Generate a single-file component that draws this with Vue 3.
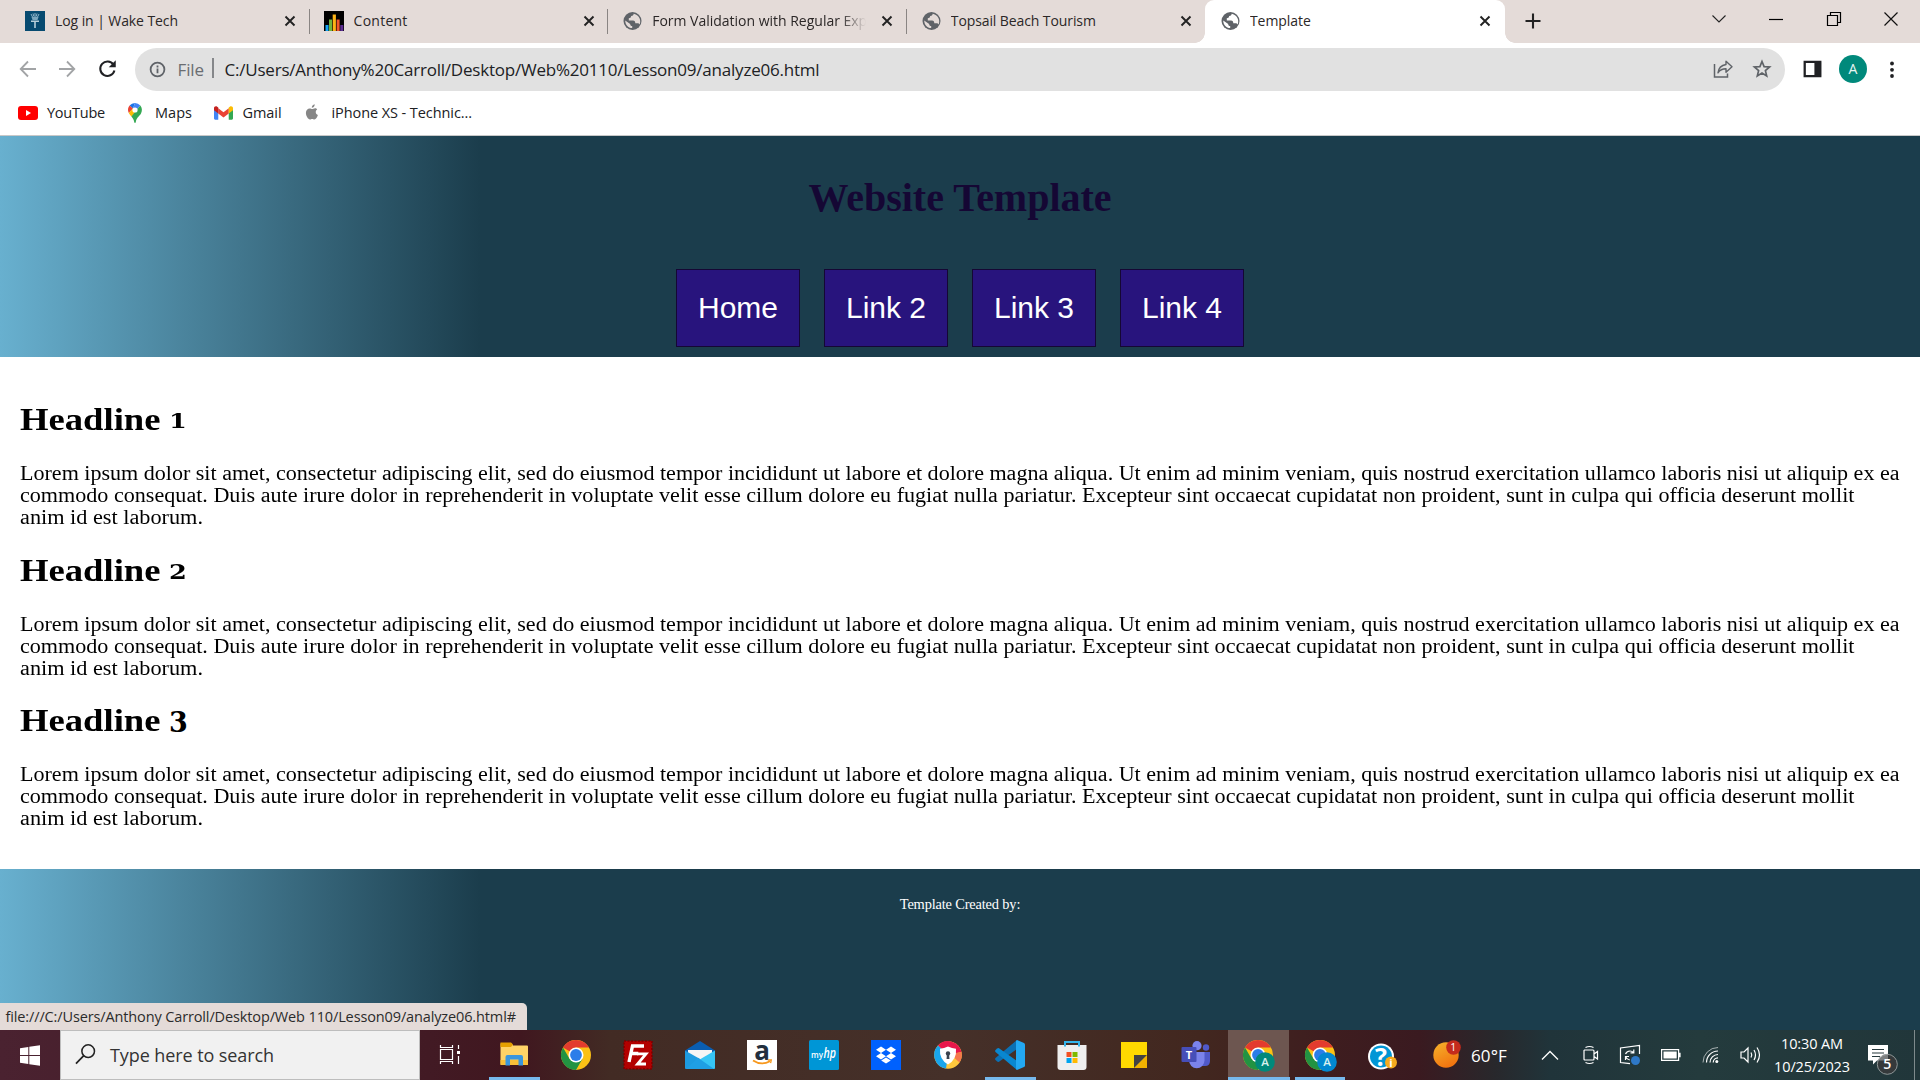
<script setup>
// Spreads or tightens letters so a label takes a given width in pixels.
const vFit = {
  mounted(el, { value }) {
    el.style.letterSpacing = '0.001px'
    const natural = el.getBoundingClientRect().width
    el.style.letterSpacing = `${(value - natural) / el.textContent.length}px`
  },
}

// Widens the glyphs themselves, for the broad serif of the article text.
const vStretch = {
  mounted(el, { value }) {
    el.style.transform = `scaleX(${value / el.getBoundingClientRect().width})`
  },
}

const tabs = [
  { title: 'Log in | Wake Tech', width: 123, icon: 'wake' },
  { title: 'Content', width: 54, icon: 'bars' },
  { title: 'Form Validation with Regular Exp', width: 215, icon: 'globe', faded: true },
  { title: 'Topsail Beach Tourism', width: 145, icon: 'globe' },
  { title: 'Template', width: 61, icon: 'globe', active: true },
]

const links = ['Home', 'Link 2', 'Link 3', 'Link 4']

const lines = [
  { text: 'Lorem ipsum dolor sit amet, consectetur adipiscing elit, sed do eiusmod tempor incididunt ut labore et dolore magna aliqua. Ut enim ad minim veniam, quis nostrud exercitation ullamco laboris nisi ut aliquip ex ea', width: 1879.5 },
  { text: 'commodo consequat. Duis aute irure dolor in reprehenderit in voluptate velit esse cillum dolore eu fugiat nulla pariatur. Excepteur sint occaecat cupidatat non proident, sunt in culpa qui officia deserunt mollit', width: 1834.5 },
  { text: 'anim id est laborum.', width: 183 },
]

const sections = [1, 2, 3]

const apps = ['explorer', 'chrome', 'filezilla', 'mail', 'amazon', 'myhp', 'dropbox', 'secure', 'vscode', 'store', 'sticky', 'teams', 'chromeA', 'chromeB', 'help']
const running = { explorer: 51, vscode: 51, chromeA: 62, chromeB: 50 }
</script>

<template>
  <div class="screen">
    <div class="tabstrip">
      <div v-for="tab in tabs" :key="tab.title" class="tab" :class="{ active: tab.active }">
        <svg v-if="tab.icon === 'wake'" class="favicon" viewBox="0 0 20 20">
          <rect width="20" height="20" fill="#064a70" />
          <path d="M6 3l1.500 3M10 2v4M14 3l-1.500 3M8 2.500l.8 3M12 2.500l-.8 3" stroke="#8fb4c8" stroke-width="1" />
          <path d="M6.500 6h7l-1 3h-5z" fill="#7ba6bd" />
          <path d="M6 10.200h8M10 10v7" stroke="#b5ced9" stroke-width="1.600" />
        </svg>
        <svg v-else-if="tab.icon === 'bars'" class="favicon" viewBox="0 0 20 20">
          <rect width="20" height="20" fill="#000" />
          <rect x="1.500" y="14" width="3" height="6" fill="#16a5f5" />
          <rect x="5" y="8.500" width="3" height="11.500" fill="#6db33f" />
          <rect x="8.700" y="3.500" width="3.200" height="16.500" fill="#fcb316" />
          <rect x="12.600" y="8.500" width="3" height="11.500" fill="#f2572b" />
          <rect x="16.300" y="14" width="3" height="6" fill="#5c2d91" />
        </svg>
        <svg v-else class="favicon globe" viewBox="0 0 20 20">
          <circle cx="10.500" cy="10" r="9" fill="#5f6368" />
          <path d="M11.700 2.700c-.2 1.600-1.200 2.200-2.500 2.300-.3 1.500-1 2.200-2.400 2.300v2.200h4.200c1.700 0 2.300 1.200 2.300 2.700h2.500c.9 0 1.500.4 1.900 1.200 1.500-3.900.1-9-6-10.700z" fill="#e4dbd8" :class="{ land: tab.active }" />
          <path d="M3.200 9.400c.1 4.200 2.800 7.500 7 7.700v-2c-1.300 0-2-.8-2-2.200z" fill="#e4dbd8" :class="{ land: tab.active }" />
        </svg>
        <div class="title" :class="{ faded: tab.faded }"><span v-fit="tab.width" class="fit">{{ tab.title }}</span></div>
        <svg class="close" viewBox="0 0 12 12"><path d="M1.500 1.500l9 9M10.500 1.500l-9 9" stroke="#222" stroke-width="1.900" /></svg>
      </div>
      <svg class="plus" viewBox="0 0 16 16"><path d="M8 .5v15M.5 8h15" stroke="#222" stroke-width="2.100" /></svg>
      <div class="window-buttons">
        <svg viewBox="0 0 16 16"><path d="M1.500 4.500L8 11l6.500-6.500" fill="none" stroke="#222" stroke-width="1.100" /></svg>
        <svg viewBox="0 0 16 16"><path d="M1 8.500h14" stroke="#000" stroke-width="1.200" /></svg>
        <svg viewBox="0 0 16 16"><path d="M1.500 4.500h10v10h-10zM4.500 4.500v-3h10v10h-3" fill="none" stroke="#000" stroke-width="1.200" /></svg>
        <svg viewBox="0 0 16 16"><path d="M1.500 1.500l13 13M14.500 1.500l-13 13" stroke="#111" stroke-width="1.200" /></svg>
      </div>
    </div>

    <div class="toolbar">
      <svg class="nav back" viewBox="0 0 18 18"><path d="M17 9H2M9 1.500L1.700 9 9 16.500" fill="none" stroke="#a2a4a6" stroke-width="1.800" /></svg>
      <svg class="nav forward" viewBox="0 0 18 18"><path d="M1 9h15M9 1.500L16.300 9 9 16.500" fill="none" stroke="#a2a4a6" stroke-width="1.800" /></svg>
      <svg class="nav reload" viewBox="0 0 18 18"><path d="M15 5.500A7 7 0 1 0 16 11.200" fill="none" stroke="#202124" stroke-width="2" /><path d="M17.300 1.200v6.800h-6.800z" fill="#202124" /></svg>
      <div class="omnibox">
        <svg class="info" viewBox="0 0 18 18"><circle cx="9" cy="9" r="7.300" fill="none" stroke="#5f6368" stroke-width="1.900" /><path d="M9 8v5M9 4.800v2" stroke="#5f6368" stroke-width="1.900" /></svg>
        <span v-fit="26.5" class="fit file">File</span>
        <i class="divider"></i>
        <span v-fit="595" class="fit url">C:/Users/Anthony%20Carroll/Desktop/Web%20110/Lesson09/analyze06.html</span>
        <svg class="share" viewBox="0 0 20 20"><path d="M1.500 5v13h13v-3.500" fill="none" stroke="#5f6368" stroke-width="1.500" /><path d="M13 2.200l6 5.600-6 5.400v-3.400c-3.500 0-6 1-8 4 .5-4.500 3-7.500 8-8.300z" fill="none" stroke="#5f6368" stroke-width="1.400" stroke-linejoin="round" /></svg>
        <svg class="star" viewBox="0 0 20 20"><path d="M10 2.500l2.100 5.100 5.500.4-4.200 3.600 1.300 5.400-4.700-2.900L5.300 17l1.300-5.400L2.400 8l5.500-.4z" fill="none" stroke="#5f6368" stroke-width="1.700" /></svg>
      </div>
      <svg class="panel" viewBox="0 0 20 18"><path d="M1.800 1.500h16.400v15H1.800z" fill="none" stroke="#202124" stroke-width="2.400" /><path d="M12 1h7v16h-7z" fill="#202124" /></svg>
      <div class="avatar">A</div>
      <svg class="dots" viewBox="0 0 4 18"><g fill="#202124"><circle cx="2" cy="3" r="1.900" /><circle cx="2" cy="9.300" r="1.900" /><circle cx="2" cy="15.500" r="1.900" /></g></svg>
    </div>

    <div class="bookmarks">
      <svg class="bm youtube" viewBox="0 0 20 14"><rect width="20" height="14" rx="3" fill="#f00" /><path d="M8 4l5 3-5 3z" fill="#fff" /></svg>
      <span v-fit="58" class="fit">YouTube</span>
      <svg class="bm maps" viewBox="0 0 14 20">
        <path d="M7 0a7 7 0 0 0-5.400 2.500L5 5.400z" fill="#1a73e8" />
        <path d="M1.600 2.500A7 7 0 0 0 .8 10L5 5.400z" fill="#ea4335" />
        <path d="M7 0a7 7 0 0 1 5.300 2.500L8.800 6.700 5 5.400z" fill="#4285f4" />
        <path d="M.8 10c.6 1.200 1.600 2.300 2.600 3.600L9.200 8.500 4.800 5.500z" fill="#fbbc04" />
        <path d="M12.300 2.500c1.800 2 2.200 5.200.7 8-2 3.300-4.500 4-5.200 8.500-.2 1.200-1.400 1.200-1.600 0-.4-2.200-1.400-3.700-2.800-5.400z" fill="#34a853" />
        <circle cx="7" cy="7" r="2.600" fill="#fff" />
      </svg>
      <span v-fit="37" class="fit">Maps</span>
      <svg class="bm gmail" viewBox="0 0 20 14">
        <path d="M0 2.500h4.500V14H1.200A1.200 1.200 0 0 1 0 12.800z" fill="#4285f4" />
        <path d="M15.500 2.500H20v10.300a1.200 1.200 0 0 1-1.200 1.200h-3.300z" fill="#34a853" />
        <path d="M4.500 2l5.500 4.100L15.500 2v5.600L10 11.700 4.500 7.600z" fill="#ea4335" />
        <path d="M0 2C0 .2 2-.6 3.400.5l1.100.8v6.300L0 4.200z" fill="#c5221f" />
        <path d="M20 2c0-1.800-2-2.600-3.400-1.500l-1.100.8v6.300L20 4.200z" fill="#fbbc04" />
      </svg>
      <span v-fit="39" class="fit">Gmail</span>
      <svg class="bm apple" viewBox="0 0 14 17"><path d="M9.700.2c.2 1.800-1.200 3.500-2.900 3.600C6.600 2.100 8 .4 9.700.2zM12.200 5.400c-2.200 1.400-1.800 4.500.7 5.500-.6 1.900-2 4.500-3.500 4.500-.9 0-1.200-.5-2.200-.5s-1.400.5-2.200.5C3.200 15.500.9 11.900.9 9c0-3 1.900-4.600 3.700-4.600 1.100 0 2 .7 2.600.7s1.600-.8 3-.8c.8 0 1.600.4 2 1.100z" fill="#868686" /></svg>
      <span v-fit="140.500" class="fit">iPhone XS - Technic...</span>
    </div>

    <div class="page">
      <header>
        <h1><span v-fit="303" class="fit">Website Template</span></h1>
        <nav><a v-for="link in links" :key="link">{{ link }}</a></nav>
      </header>
      <main>
        <section v-for="n in sections" :key="n">
          <h2><span v-stretch="140.5" class="word">Headline</span> <span class="numeral" :class="{ low: n === 3 }">{{ n }}</span></h2>
          <p><span v-for="line in lines" :key="line.width" v-stretch="line.width" class="line">{{ line.text }}</span></p>
        </section>
      </main>
      <footer>
        <span v-fit="120.5" class="fit">Template Created by:</span>
        <div class="status"><span v-fit="510.5" class="fit">file:///C:/Users/Anthony Carroll/Desktop/Web 110/Lesson09/analyze06.html#</span></div>
      </footer>
    </div>

    <div class="taskbar">
      <div class="start"><svg viewBox="0 0 20 21"><path d="M0 3.200L8.300 2v8H0zM9.300 1.800L20 .3V10H9.300zM0 11h8.300v8L0 17.800zM9.300 11H20v9.800L9.300 19.300z" fill="#fff" /></svg></div>
      <div class="search">
        <svg viewBox="0 0 22 22"><circle cx="13.800" cy="8" r="6.600" fill="none" stroke="#222" stroke-width="1.600" /><path d="M9.200 12.800L1 21" stroke="#222" stroke-width="1.800" /></svg>
        <span v-fit="164" class="fit">Type here to search</span>
      </div>
      <div class="taskview"><svg viewBox="0 0 22 22"><path d="M1.500 5.500h12v10h-12zM1.500 1v2.500h12V1M1.500 20v-2.500h12V20M19.500 1v4M19.500 12v8" fill="none" stroke="#fff" stroke-width="1.200" /><path d="M18 7h3v3h-3z" fill="#fff" /></svg></div>

      <div v-for="app in apps" :key="app" class="app" :class="{ current: app === 'chromeA' }">
        <svg v-if="app === 'explorer'" viewBox="0 0 30 30">
          <path d="M1.500 3.500h11l1.500 2h14q1 0 1 1v18H1.500z" fill="#ffd367" /><path d="M1.500 2.500h10.500l2 2-2 2.500H1.500z" fill="#e5a000" />
          <path d="M1.500 20h27.500v5H1.500z" fill="#f9bf38" /><path d="M6.500 25.500V17q0-2 2-2h13.500q2 0 2 2v8.500h-4.500v-6h-8.500v6z" fill="#3a96dd" />
        </svg>
        <svg v-else-if="app === 'chrome' || app === 'chromeA' || app === 'chromeB'" viewBox="0 0 30 30">
          <circle cx="15" cy="15" r="15" fill="#fbc116" />
          <path d="M2 7.500A15 15 0 0 1 28 7.500H15L8.500 11.300z" fill="#e33b2e" />
          <path d="M2 7.500a15 15 0 0 0 13 22.500l6.500-11.300L8.500 18.700z" fill="#229342" />
          <circle cx="15" cy="15" r="7.500" fill="#fff" /><circle cx="15" cy="15" r="5.900" fill="#2b7de9" />
          <template v-if="app !== 'chrome'">
            <circle cx="22" cy="22" r="9.800" :fill="app === 'chromeA' ? '#00897b' : '#0288d1'" />
            <text x="22" y="26" text-anchor="middle" font-size="11.500" font-weight="600" font-family="Open Sans, sans-serif" fill="#d8f1ee">A</text>
          </template>
        </svg>
        <svg v-else-if="app === 'filezilla'" viewBox="0 0 30 30">
          <rect x="1" y="1" width="28" height="28" fill="#b30000" /><rect x="1" y="1" width="28" height="28" fill="none" stroke="#7c0000" stroke-width="1.600" stroke-dasharray="2 1.500" />
          <path d="M6 22L9.500 6h11.500M7.800 13.500h7.500" fill="none" stroke="#fff" stroke-width="3.400" /><path d="M14 13.800h9L14.500 24h8.500" fill="none" stroke="#fff" stroke-width="2.800" />
        </svg>
        <svg v-else-if="app === 'mail'" viewBox="0 0 30 30">
          <path d="M0 10.500L15 1l15 9.500v4H0z" fill="#0a5db0" /><path d="M3 10h24v6L15 21 3 15z" fill="#f5f5f5" />
          <path d="M0 10.500L15 19v10H1q-1 0-1-1z" fill="#1d9be0" /><path d="M30 10.500L13 20.500 28 29h1q1 0 1-1z" fill="#36c5f5" /><path d="M13 17.800L29 29H1z" fill="#1f9fe4" />
        </svg>
        <svg v-else-if="app === 'amazon'" viewBox="0 0 30 30">
          <rect width="30" height="30" fill="#fff" /><text x="15" y="19.500" text-anchor="middle" font-family="Open Sans, sans-serif" font-size="26" font-weight="700" fill="#232f3e">a</text>
          <path d="M6 20.500q8.500 5.500 17 .7" fill="none" stroke="#f7981d" stroke-width="1.800" /><path d="M20.800 20h3.500l-.7 3.200" fill="none" stroke="#f7981d" stroke-width="1.300" />
        </svg>
        <svg v-else-if="app === 'myhp'" viewBox="0 0 30 30">
          <rect width="30" height="30" rx="1.500" fill="#0096d6" />
          <text x="2" y="18" font-family="Open Sans, sans-serif" font-size="8.500" font-weight="600" fill="#fff" textLength="12" lengthAdjust="spacingAndGlyphs">my</text>
          <text x="14.500" y="18" font-family="Open Sans, sans-serif" font-size="14" font-weight="600" font-style="italic" fill="#fff" textLength="12.500" lengthAdjust="spacingAndGlyphs">hp</text>
        </svg>
        <svg v-else-if="app === 'dropbox'" viewBox="0 0 30 30"><rect width="30" height="30" fill="#0061fe" /><path d="M10 6.500l5 3.200-5 3.200-5-3.200zM20 6.500l5 3.200-5 3.200-5-3.200zM10 13l5 3.200-5 3.200-5-3.200zM20 13l5 3.200-5 3.200-5-3.200zM15 17.500l4.800 3-4.800 3-4.800-3z" fill="#fff" /></svg>
        <svg v-else-if="app === 'secure'" viewBox="0 0 30 30">
          <circle cx="15" cy="15" r="13.800" fill="#ffc83d" /><path d="M15 15L5 5.500A13.800 13.800 0 0 1 28.500 12z" fill="#e8174b" /><path d="M5 5.500A13.800 13.800 0 0 0 13 28.600L15 15z" fill="#18a5ec" /><path d="M28.500 12a13.800 13.800 0 0 1-2 10.500L17 14z" fill="#f5774b" />
          <path d="M15 6.500q4 2 8 2.200 1 10.500-8 15.800-9-5.300-8-15.800 4-.2 8-2.200z" fill="#fff" /><circle cx="15" cy="13.500" r="2.200" fill="#39424e" /><path d="M14 14h2l.5 5h-3z" fill="#39424e" />
        </svg>
        <svg v-else-if="app === 'vscode'" viewBox="0 0 30 30">
          <path d="M22 0v9L4 21.800q-1 .5-1.800-.2L.5 20q-1-1 0-2z" fill="#0b70b4" /><path d="M22 30v-9L4 8.200q-1-.5-1.800.2L.5 10q-1 1 0 2z" fill="#0987d0" /><path d="M22 0l7 3q1 .5 1 1.500v21q0 1-1 1.500l-7 3-1-1V1z" fill="#23a8f2" />
        </svg>
        <svg v-else-if="app === 'store'" viewBox="0 0 30 30">
          <path d="M.5 5h29v22q0 3-3 3h-23q-3 0-3-3z" fill="#efefef" /><path d="M8 6.500V2h14v4.500" fill="none" stroke="#35b5ec" stroke-width="2" />
          <path d="M9.500 12h5v5h-5z" fill="#f25022" /><path d="M15.500 12h5v5h-5z" fill="#7fba00" /><path d="M9.500 18h5v5h-5z" fill="#00a4ef" /><path d="M15.500 18h5v5h-5z" fill="#ffb900" />
        </svg>
        <svg v-else-if="app === 'sticky'" viewBox="0 0 30 30"><path d="M2 2h26v26H2z" fill="#ffd900" /><path d="M15 28L28 15v13z" fill="#f2b200" /><path d="M15 15h13L15 28z" fill="#424242" /></svg>
        <svg v-else-if="app === 'teams'" viewBox="0 0 30 30">
          <circle cx="16" cy="5.700" r="4.600" fill="#7b83eb" /><circle cx="25" cy="7.500" r="3.200" fill="#5059c9" /><path d="M20 12h9v9q0 5-5 5H20z" fill="#5059c9" /><path d="M8 12h15.500v8.500a7.750 7.750 0 0 1-15.500 0z" fill="#7b83eb" /><rect x=".5" y="7" width="15" height="15" rx="1" fill="#464eb8" />
          <text x="8" y="18.500" text-anchor="middle" font-family="Open Sans, sans-serif" font-size="11" font-weight="700" fill="#fff">T</text>
        </svg>
        <svg v-else viewBox="0 0 30 30">
          <circle cx="14" cy="16.500" r="13" fill="#fff" /><circle cx="14" cy="16.500" r="11" fill="#0096d6" /><text x="14" y="25.500" text-anchor="middle" font-family="Open Sans, sans-serif" font-size="25" font-weight="700" fill="#fff">?</text>
          <circle cx="24" cy="22.500" r="6" fill="#f5ab1e" /><text x="24" y="26.500" text-anchor="middle" font-family="Open Sans, sans-serif" font-size="11" font-weight="700" fill="#fff">i</text>
        </svg>
        <i v-if="running[app]" class="underline" :style="{ width: running[app] + 'px' }"></i>
      </div>

      <div class="tray">
        <svg class="weather" viewBox="0 0 30 30">
          <defs><linearGradient id="sun" x1="0" y1="0" x2=".5" y2="1"><stop offset="0" stop-color="#f5b32b" /><stop offset="1" stop-color="#f27510" /></linearGradient></defs>
          <circle cx="13" cy="15" r="12.700" fill="url(#sun)" /><circle cx="20.500" cy="7.500" r="7.300" fill="#c42b1c" /><text x="20.300" y="11.300" text-anchor="middle" font-family="Open Sans, sans-serif" font-size="10.500" fill="#fff">1</text>
        </svg>
        <span v-fit="36" class="fit temp">60°F</span>
        <svg class="chev" viewBox="0 0 18 12"><path d="M1 10.500L9 2.500l8 8" fill="none" stroke="#fff" stroke-width="1.300" /></svg>
        <svg class="meet" viewBox="0 0 18 20"><path d="M2.500 5h8.500q1 0 1 1v8q0 1-1 1H3q-1 0-1-1V5.500zM12 9l3.500-2.500v7.500L12 11.500M3.500 2.500q4-2 8 0M3.500 17.500q4 2 8 0" fill="none" stroke="#fff" stroke-width="1.200" /></svg>
        <svg class="update" viewBox="0 0 22 22"><path d="M20.500 10V1.500L1.500 4v14.500l9.500 1.200" fill="none" stroke="#fff" stroke-width="1.200" /><path d="M6.500 10q1.500-3 4.500-3 2 0 3.500 1.500M14.800 5.500v3.300h-3.300M6.500 16v-3.500H10M6.800 13q1 2.500 4 3" fill="none" stroke="#fff" stroke-width="1.200" /><circle cx="16.500" cy="16.500" r="4.500" fill="#2e78c7" /></svg>
        <svg class="battery" viewBox="0 0 20 12"><path d="M.6.600h17v10.800H.6z" fill="none" stroke="#fff" stroke-width="1.200" /><path d="M2.500 2.500h13.200v7H2.500zM18 3.800h1.600v4.500H18z" fill="#fff" /></svg>
        <svg class="wifi" viewBox="0 0 18 18"><g fill="none" stroke="#fff"><path d="M1 16.500A15 15 0 0 1 16 1.500" stroke-opacity=".6" /><path d="M4.500 16.500A11.500 11.500 0 0 1 16 5" stroke-width="1.200" /><path d="M8 16.500A8 8 0 0 1 16 8.500" stroke-width="1.200" /><path d="M11.200 16.500A4.800 4.800 0 0 1 16 11.800" stroke-width="1.200" /></g><circle cx="14.800" cy="15.500" r="1.500" fill="#fff" /></svg>
        <svg class="sound" viewBox="0 0 22 20"><path d="M1 7h3l4-4v14l-4-4H1z" fill="none" stroke="#fff" stroke-width="1.200" /><path d="M11 7.500q1.500 2.500 0 5M14 5q3 5 0 10M17 2.500q5 7.500 0 15" fill="none" stroke="#fff" stroke-width="1.200" /></svg>
        <div class="clock"><span v-fit="62" class="fit">10:30 AM</span><span v-fit="76" class="fit">10/25/2023</span></div>
        <svg class="notes" viewBox="0 0 32 32"><path d="M1 1h20v15.500H10L6 20.500v-4H1z" fill="#fff" /><path d="M5 5.500h12M5 9h12M5 12.500h8" stroke="#26383c" stroke-width="1.200" /><circle cx="20.300" cy="20.300" r="10" fill="#35393b" stroke="#8f9697" stroke-width="1" /><path d="M11 16.500a10 10 0 0 1 10-6v6z" fill="#fff" fill-opacity=".35" /><text x="20.300" y="25.300" text-anchor="middle" font-family="Open Sans, sans-serif" font-size="14" font-weight="600" fill="#fff">5</text></svg>
      </div>
    </div>
  </div>
</template>

<style>
html, body { margin: 0; overflow: hidden; }
</style>

<style scoped>
.screen { width: 1920px; height: 1080px; display: flex; flex-direction: column; background: #fff; font-family: "Open Sans", "Noto Sans", sans-serif; overflow: hidden; }
svg { display: block; flex: none; overflow: visible; }
.fit { display: inline-block; white-space: nowrap; flex: none; }

.tabstrip { height: 43px; flex: none; display: flex; align-items: center; background: #e4dbd8; padding-left: 11px; box-sizing: border-box; }
.tab { position: relative; width: 298.600px; height: 43px; flex: none; display: flex; align-items: center; padding: 0 0 1px 14px; box-sizing: border-box; color: #2b2727; font-size: 14px; }
.tab:not(.active)::after { content: ""; position: absolute; right: 0; top: 9px; width: 1px; height: 25px; background: #8a8583; }
.tab:nth-child(4)::after { display: none; }
.tab.active { background: #fff; border-radius: 9px 9px 0 0; width: 300px; padding-left: 14.500px; }
.tab.active::before, .tab.active::after { content: ""; position: absolute; bottom: 0; width: 10px; height: 10px; }
.tab.active::before { left: -10px; background: radial-gradient(circle at 0 0, transparent 9.500px, #fff 10px); }
.tab.active::after { right: -10px; background: radial-gradient(circle at 100% 0, transparent 9.500px, #fff 10px); }
.favicon { width: 20px; height: 20px; }
.land { fill: #fff; }
.title { width: 214px; margin: -1px 0 0 10px; overflow: hidden; line-height: 24px; height: 24px; }
.title.faded { -webkit-mask-image: linear-gradient(90deg, #000 188px, transparent 214px); mask-image: linear-gradient(90deg, #000 188px, transparent 214px); }
.close { width: 12px; height: 12px; margin-left: 15px; }
.plus { width: 16px; height: 16px; margin: -1px 0 0 19.500px; }
.window-buttons { margin: -6px 21px 0 auto; display: flex; gap: 41.500px; }
.window-buttons svg { width: 16px; height: 16px; }

.toolbar { height: 52px; flex: none; display: flex; align-items: center; padding-left: 19px; }
.nav { width: 18px; height: 18px; margin-top: -1px; }
.forward { margin-left: 21px; }
.reload { margin-left: 22px; width: 18.500px; height: 18.500px; }
.omnibox { width: 1650px; height: 43px; flex: none; margin-left: 18.500px; border-radius: 22px; background: #e1e1e1; display: flex; align-items: center; box-sizing: border-box; padding: 0 13px 0 14px; font-size: 17px; color: #202124; }
.info { width: 17px; height: 17px; }
.file { margin-left: 11.500px; color: #6a6d71; }
.divider { width: 1.500px; height: 20px; background: #85878a; margin: -2px 10.500px 0 8.500px; }
.share { width: 20px; height: 20px; margin-left: auto; }
.star { width: 20px; height: 20px; margin-left: 19px; }
.panel { width: 19px; height: 18px; margin-left: 18px; }
.avatar { width: 28px; height: 28px; margin-left: 17px; border-radius: 50%; background: #00897b; color: #e9f5f3; font-size: 14px; line-height: 28px; text-align: center; }
.dots { width: 4px; height: 19px; margin-left: 23px; }

.bookmarks { height: 41px; flex: none; display: flex; align-items: center; padding: 0 0 5px 18px; border-bottom: 1px solid #c8c8c8; box-sizing: border-box; color: #202124; font-size: 14.500px; }
.youtube { width: 20px; height: 14px; margin-right: 9px; }
.maps { width: 14px; height: 20px; margin: 0 13px 0 23px; }
.gmail { width: 19px; height: 14px; margin: 0 9.500px 0 22px; }
.apple { width: 14px; height: 17px; margin: 0 13px 0 23px; }

.page { flex: none; height: 894px; display: flex; flex-direction: column; font-family: "Liberation Serif", serif; color: #000; }
header, footer { background: linear-gradient(90deg, #68b0cf 0, #1b3d4c 480px); flex: none; }
header { height: 221px; display: flex; flex-direction: column; align-items: center; }
h1 { margin: 40px 0 0; font-size: 40px; line-height: 44px; color: #150734; }
nav { display: flex; gap: 24px; margin-top: 49px; }
nav a { box-sizing: border-box; width: 124px; height: 78px; border: 1px solid #150734; background: #28147d; color: #fff; font: 30px/75px "Liberation Sans", sans-serif; text-align: center; }
main { height: 512px; box-sizing: border-box; padding: 44px 20px 0; flex: none; }
section { height: 150.500px; }
h2 { position: relative; margin: 0; font-size: 32px; line-height: 36px; height: 36px; display: flex; align-items: baseline; }
.word { flex: none; transform-origin: 0 50%; width: max-content; }
.numeral { position: absolute; top: 2px; margin-left: 149px; font: bold 20px/36px "DejaVu Serif", serif; transform: scaleX(1.280); transform-origin: 0 50%; }
.numeral.low { font-size: 27px; top: 3px; transform: none; }
p { margin: 25px 0 0; font-size: 20.500px; line-height: 22px; display: flex; flex-direction: column; align-items: flex-start; }
.line { white-space: nowrap; transform-origin: 0 50%; }
footer { height: 161px; position: relative; text-align: center; color: #fff; font-size: 14.400px; line-height: 18px; padding-top: 26px; box-sizing: border-box; }
.status { position: absolute; left: 0; bottom: 0; width: 527px; height: 27px; box-sizing: border-box; padding-left: 5.500px; text-align: left; background: #e4dbd8; border-radius: 0 5px 0 0; color: #2b2b2b; font: 14.500px/27px "Open Sans", sans-serif; }

.taskbar { height: 50px; flex: none; display: flex; color: #fff; background: linear-gradient(90deg, #4a2230 0, #421a24 430px, #40171f 520px, #422b24 610px, #453029 950px, #42271f 1200px, #3e1d1f 1330px, #3a1a20 1420px, #28282c 1495px, #20343a 1550px, #243b3d 1700px, #21363a 1920px); }
.start { width: 60px; display: flex; align-items: center; justify-content: center; }
.start svg { width: 20px; height: 21px; }
.search { width: 360px; box-sizing: border-box; border: 1px solid #bdbdbd; background: #f1f1f1; display: flex; align-items: center; color: #333; font-size: 18px; }
.search svg { width: 21px; height: 22px; margin: -2px 14px 0 14px; }
.taskview { width: 63px; display: flex; align-items: center; padding-left: 19px; box-sizing: border-box; }
.taskview svg { width: 22px; height: 22px; margin-top: -1px; }
.app { position: relative; width: 62px; display: flex; align-items: center; justify-content: center; }
.app > svg { width: 30px; height: 30px; }
.app.current { background: #6d5650; width: 61px; margin-left: 1px; }
.app.current > svg { margin-left: -1px; }
.underline { position: absolute; bottom: 0; height: 3px; background: #76b9ed; }
.tray { position: relative; flex: 1; display: flex; align-items: center; padding-left: 20px; font-size: 17px; }
.tray::after { content: ""; position: absolute; right: 5px; top: 0; width: 1px; height: 50px; background: #7e8a8c; }
.weather { width: 30px; height: 30px; margin-right: 8px; }
.chev { width: 18px; height: 12px; margin-left: 34px; }
.meet { width: 18px; height: 20px; margin-left: 23px; }
.update { width: 22px; height: 22px; margin: -1px 0 0 19px; }
.battery { width: 20px; height: 12px; margin-left: 20px; }
.wifi { width: 18px; height: 18px; margin-left: 21px; }
.sound { width: 22px; height: 20px; margin-left: 20px; }
.clock { width: 78px; margin-left: 11px; display: flex; flex-direction: column; align-items: center; font-size: 14.500px; line-height: 23px; }
.notes { width: 32px; height: 32px; margin: 10px 0 0 16px; }
</style>
